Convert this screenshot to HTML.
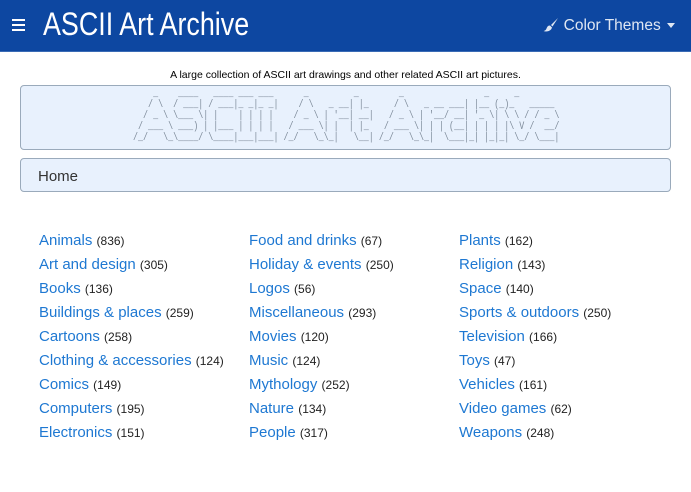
<!DOCTYPE html>
<html><head><meta charset="utf-8"><style>
*{box-sizing:border-box;margin:0;padding:0}
body{width:691px;height:492px;overflow:hidden;background:#fff;font-family:"Liberation Sans",sans-serif;}
.nav{height:52px;background:#0d47a1;border-bottom:1px solid #3a6bb5;position:relative;color:#fff}
.burger{position:absolute;left:12px;top:19px;width:13px}
.burger i{display:block;height:2px;background:#fff;margin-bottom:3px}
.title{position:absolute;left:43px;top:6px;font-size:32px;transform:scaleX(0.84);transform-origin:left;white-space:nowrap}
.ct{position:absolute;right:16px;top:17px;font-size:15.5px;color:#dfe7f3}
.ct .car{display:inline-block;border-left:4px solid transparent;border-right:4px solid transparent;border-top:5px solid #dfe7f3;vertical-align:middle;margin-left:2px}
.tag{position:absolute;top:69px;left:0;width:691px;text-align:center;font-size:10.5px;color:#000}
.banner{position:absolute;left:20px;top:85px;width:651px;height:65px;background:#e8f1fd;border:1px solid #9aaabb;border-radius:4px;overflow:hidden}
.banner pre{position:absolute;left:112px;top:3px;font-family:"Liberation Mono",monospace;font-size:11px;line-height:11px;color:#7d8a99;transform:scaleX(0.76);transform-origin:left top}
.crumb{position:absolute;left:20px;top:158px;width:651px;height:34px;background:#e8f1fd;border:1px solid #9aaabb;border-radius:4px;padding:9px 0 0 17px;font-size:15px;color:#333}
.col{position:absolute;top:232px}
.col div{height:24px;font-size:15px;color:#1e78d2;white-space:nowrap}
.col span{font-size:12px;color:#222}
</style></head><body>
<div class="nav">
<div class="burger"><i></i><i></i><i></i></div>
<div class="title">ASCII Art Archive</div>
<div class="ct"><svg width="16" height="15" viewBox="0 0 16 15" style="vertical-align:-2px"><path d="M15 1 L8 8 L9.5 9.5 Z" fill="#dfe7f3"/><path d="M7 8.5 C4 8.5 4 11 3 12.5 C2 14 0.5 14 0.5 14 C3 15 8 14.5 9 10.5 Z" fill="#dfe7f3"/></svg> Color Themes <span class="car"></span></div>
</div>
<div class="tag">A large collection of ASCII art drawings and other related ASCII art pictures.</div>
<div class="banner"><pre>    _    ____   ____ ___ ___      _         _        _                _     _           
   / \  / ___| / ___|_ _|_ _|    / \   _ __| |_     / \   _ __ ___| |__ (_)_   _____ 
  / _ \ \___ \| |    | | | |    / _ \ | '__| __|   / _ \ | '__/ __| '_ \| \ \ / / _ \
 / ___ \ ___) | |___ | | | |   / ___ \| |  | |_   / ___ \| | | (__| | | | |\ V /  __/
/_/   \_\____/ \____|___|___| /_/   \_\_|   \__| /_/   \_\_|  \___|_| |_|_| \_/ \___|</pre></div>
<div class="crumb">Home</div>
<div class="col" style="left:39px">
<div>Animals <span>(836)</span></div><div>Art and design <span>(305)</span></div><div>Books <span>(136)</span></div><div>Buildings &amp; places <span>(259)</span></div><div>Cartoons <span>(258)</span></div><div>Clothing &amp; accessories <span>(124)</span></div><div>Comics <span>(149)</span></div><div>Computers <span>(195)</span></div><div>Electronics <span>(151)</span></div>
</div>
<div class="col" style="left:249px">
<div>Food and drinks <span>(67)</span></div><div>Holiday &amp; events <span>(250)</span></div><div>Logos <span>(56)</span></div><div>Miscellaneous <span>(293)</span></div><div>Movies <span>(120)</span></div><div>Music <span>(124)</span></div><div>Mythology <span>(252)</span></div><div>Nature <span>(134)</span></div><div>People <span>(317)</span></div>
</div>
<div class="col" style="left:459px">
<div>Plants <span>(162)</span></div><div>Religion <span>(143)</span></div><div>Space <span>(140)</span></div><div>Sports &amp; outdoors <span>(250)</span></div><div>Television <span>(166)</span></div><div>Toys <span>(47)</span></div><div>Vehicles <span>(161)</span></div><div>Video games <span>(62)</span></div><div>Weapons <span>(248)</span></div>
</div>
</body></html>
